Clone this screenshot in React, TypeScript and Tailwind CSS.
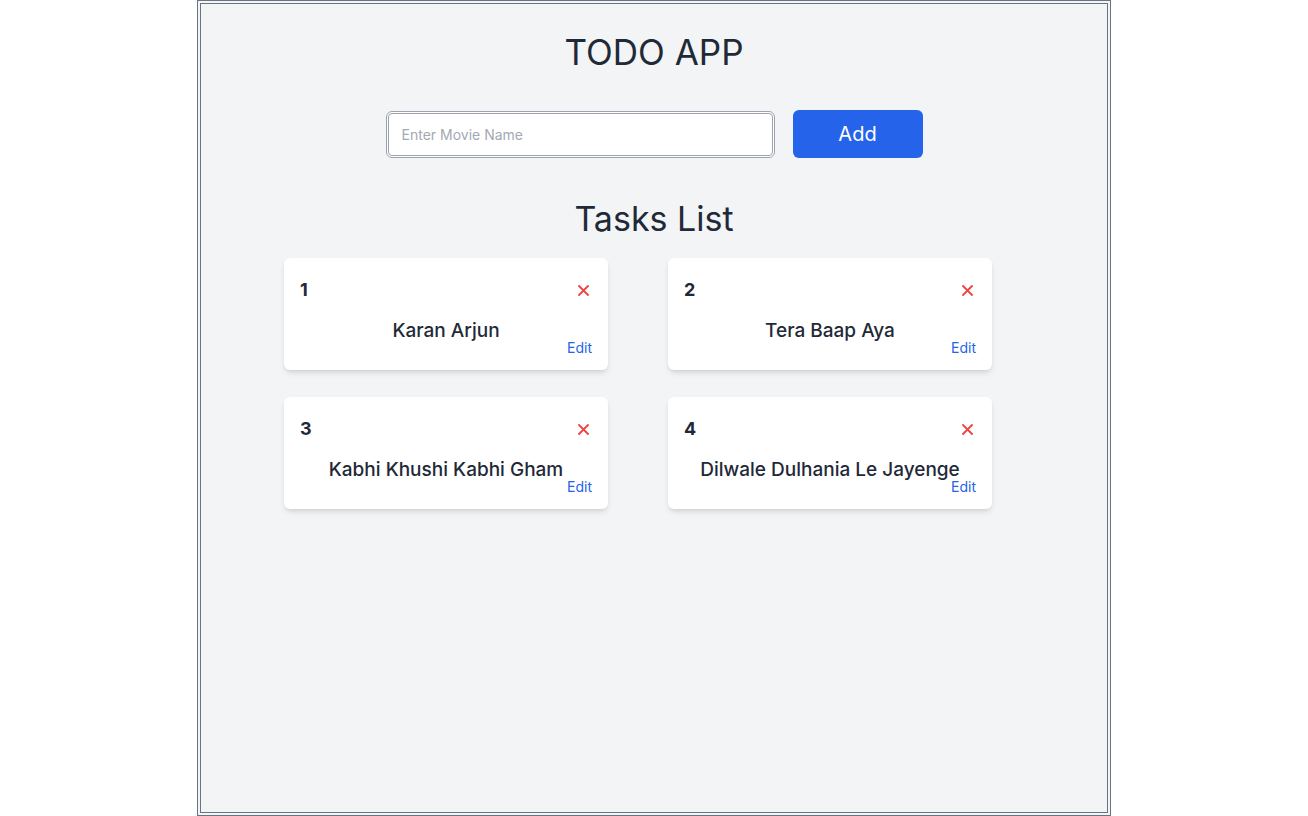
import React, { useState } from 'react';

const initialTasks = ['Karan Arjun', 'Tera Baap Aya', 'Kabhi Khushi Kabhi Gham', 'Dilwale Dulhania Le Jayenge'];

function App() {
  const [tasks, setTasks] = useState(initialTasks);
  const [name, setName] = useState('');

  const addTask = () => {
    if (!name.trim()) return;
    setTasks((prev) => [...prev, name.trim()]);
    setName('');
  };

  return (
    <main className="bg-white min-h-screen font-['Inter',sans-serif]">
      <div className="w-[914px] h-[816px] mx-auto bg-[#f3f4f6] border-[4px] border-double border-[#6b7280] pt-[28px]">
        <h1 className="text-center text-[35px] leading-10 text-[#1f2937]">TODO APP</h1>
        <div className="flex justify-center items-center gap-[18px] mt-[38px]">
          <input
            type="text"
            value={name}
            onChange={(e) => setName(e.target.value)}
            onKeyDown={(e) => e.key === 'Enter' && addTask()}
            placeholder="Enter Movie Name"
            className="w-[389px] h-[47px] bg-white border-[3px] border-double border-[#9ca3af] rounded-md px-[13px] text-sm text-gray-700 placeholder:text-[#a3a9b3] outline-none"
          />
          <button onClick={addTask} className="w-[130px] h-[48px] bg-[#2563eb] rounded-md text-white text-xl">
            Add
          </button>
        </div>
        <h2 className="text-center text-[34px] leading-10 text-[#1f2937] mt-[41px]">Tasks List</h2>
        <div className="w-[740px] mx-auto mt-[19px]">
          <ul className="grid grid-cols-[324px_324px] gap-x-[60px] gap-y-[27px]">
            {tasks.map((task, i) => (
              <li key={i} className="bg-white rounded-md shadow-md h-[112px] px-4 pt-[18px]">
                <div className="flex justify-between items-center">
                  <span className="text-lg font-bold text-[#1f2937] leading-7">{i + 1}</span>
                  <button
                    onClick={() => setTasks((prev) => prev.filter((_, j) => j !== i))}
                    className="mr-[3px] text-[#ef4444]"
                  >
                    <svg width="11" height="11" viewBox="0 0 11 11" fill="none" stroke="currentColor" strokeWidth="1.8" strokeLinecap="round">
                      <path d="M1 1L10 10M10 1L1 10" />
                    </svg>
                  </button>
                </div>
                <p className="text-center text-[19px] font-medium text-[#1f2937] leading-6 mt-[15px]">{task}</p>
                <div className="text-right -mt-[8px]">
                  <a href="#" className="text-sm leading-5 text-[#2563eb]">Edit</a>
                </div>
              </li>
            ))}
          </ul>
        </div>
      </div>
    </main>
  );
}

export default App;
